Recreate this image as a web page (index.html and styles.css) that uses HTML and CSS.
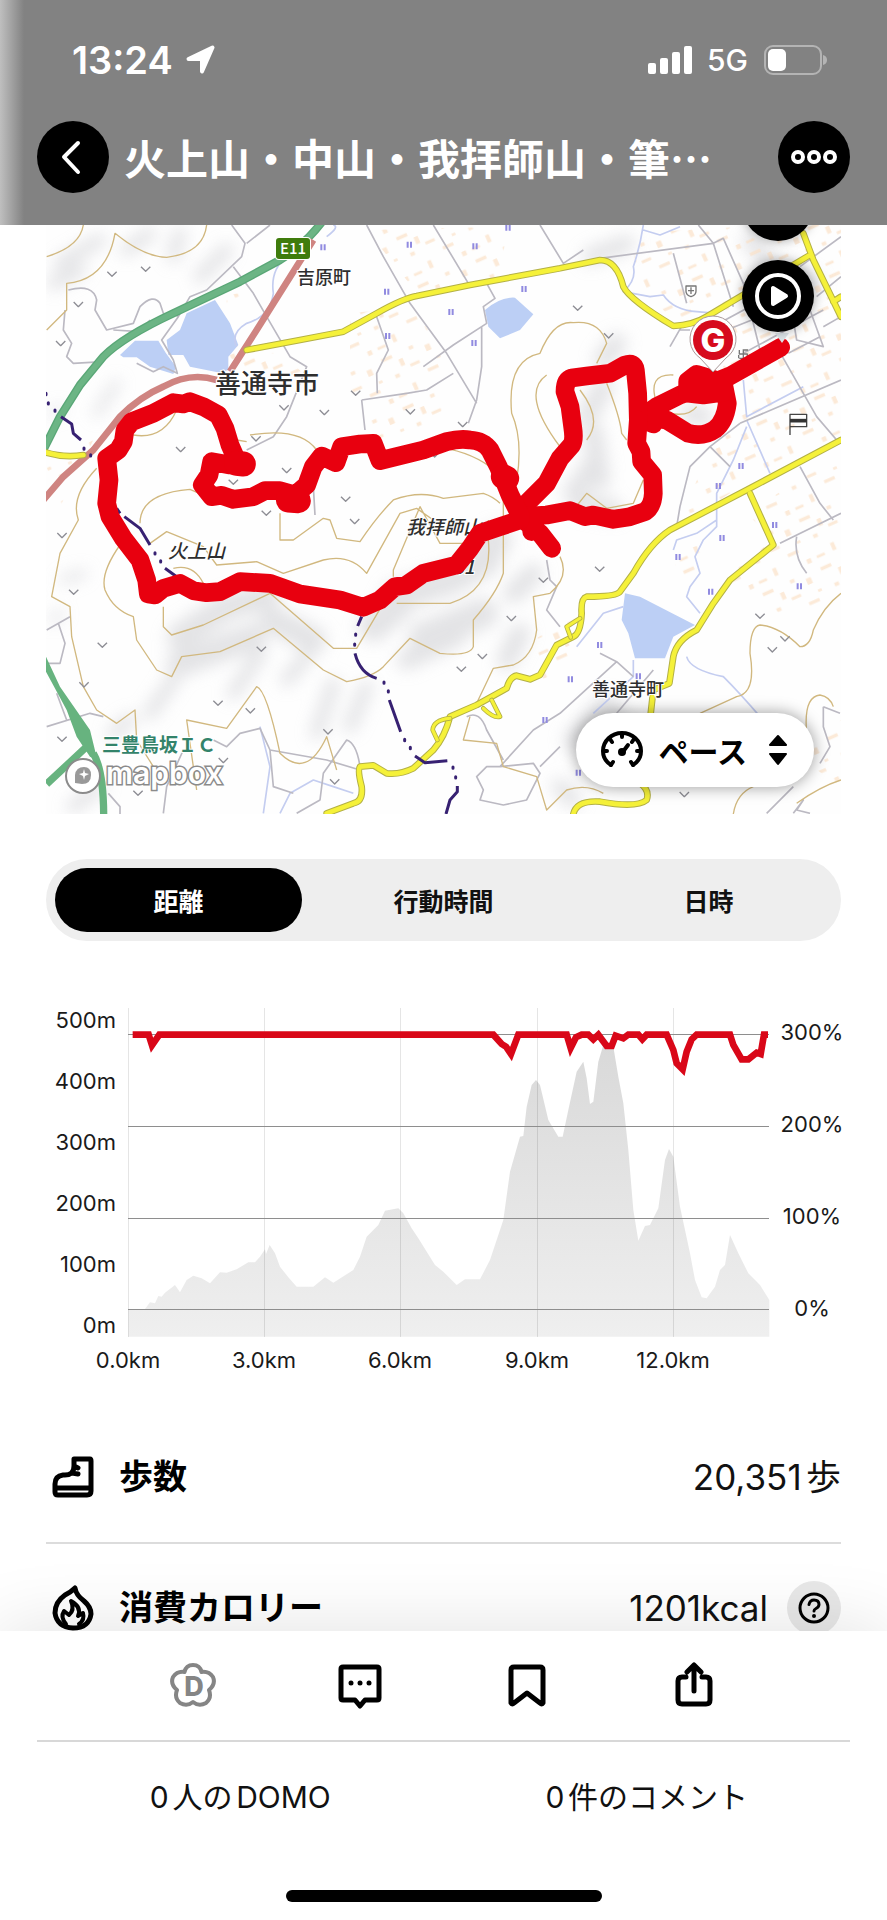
FILE: index.html
```html
<!DOCTYPE html>
<html lang="ja">
<head>
<meta charset="utf-8">
<meta name="viewport" content="width=device-width, initial-scale=1">
<title>活動記録</title>
<link rel="stylesheet" href="styles.css">
</head>
<body>
<header class="header">
  <div class="status">
    <span class="status-time">13:24</span>
    <svg class="status-arrow" viewBox="0 0 30 30" aria-hidden="true"><path d="M27.500 2.500L17 26.500V14H3.500Z" fill="#fff" stroke="#fff" stroke-width="4" stroke-linejoin="round"/></svg>
    <svg class="status-signal" viewBox="0 0 45 28" aria-hidden="true"><g fill="#fff"><rect y="17" width="8" height="11" rx="2"/><rect x="12" y="12" width="8" height="16" rx="2"/><rect x="24" y="6" width="8" height="22" rx="2"/><rect x="36" width="8" height="28" rx="2"/></g></svg>
    <span class="status-net">5G</span>
    <svg class="status-battery" viewBox="0 0 63 30" aria-hidden="true"><rect x="1" y="1" width="56" height="28" rx="8" fill="none" stroke="#b4b4b4" stroke-width="2"/><rect x="4" y="4" width="18" height="22" rx="5" fill="#fff"/><path d="M59 10q4 1 4 5t-4 5z" fill="#b4b4b4"/></svg>
  </div>
  <div class="nav">
    <button class="round" aria-label="戻る"><svg viewBox="0 0 72 72"><path d="M41 22L27 36L41 51" fill="none" stroke="#fff" stroke-width="4" stroke-linecap="round" stroke-linejoin="round"/></svg></button>
    <h1 class="title">火上山・中山・我拝師山・筆…</h1>
    <button class="round" aria-label="その他"><svg viewBox="0 0 72 72"><g fill="none" stroke="#fff" stroke-width="4"><circle cx="20" cy="36" r="5"/><circle cx="36" cy="36" r="5"/><circle cx="52" cy="36" r="5"/></g></svg></button>
  </div>
</header>

<main class="main">
  <section class="map" aria-label="地図">
    <svg class="map-art" viewBox="46 225 795 589">
      <defs>
        <path id="veg" d="M-14-8L0 6L14-8" fill="none" stroke="#8d8d94" stroke-width="4"/>
        <path id="rice" d="M-5-9V9M5-9V9" fill="none" stroke="#918be0" stroke-width="6"/>
        <filter id="soft" x="-30%" y="-30%" width="160%" height="160%"><feGaussianBlur stdDeviation="24"/></filter>
        <pattern id="town" width="190" height="158" patternUnits="userSpaceOnUse" patternTransform="rotate(-24)"><path d="M4 8h34v11H4zM52 30h13v22H52zM94 7h14v10H94zM23 68h14v11H23zM78 56h30v9H78zM140 22h16v20H140zM120 90h34v10H120zM60 112h12v24H60zM8 130h26v8H8zM165 128h14v14H165zM160 66h12v8H160z" fill="#fbe2c8" opacity=".7"/></pattern>
      </defs>
      <rect x="46" y="225" width="795" height="589" fill="#fefefe"/>
      <g transform="translate(40 220) scale(.33333)" stroke-linejoin="round">
        <g filter="url(#soft)" fill="none" stroke="#cdced2" stroke-linecap="round" opacity=".55">
          <path d="M60 130L180 60M260 90L330 40M400 110L420 40M480 170L560 90M40 190L120 150" stroke-width="40"/>
          <path d="M230 490L170 580M60 570L40 580M70 1080L130 1060M60 1180L40 1200" stroke-width="26"/>
          <path d="M420 1250L560 1160L680 1130M420 1330L640 1250M700 1200L820 1260" stroke-width="80"/>
          <path d="M330 1480L400 1380M580 1420L660 1300M740 1380L800 1310M830 1540L880 1390M930 1520L980 1400M220 1540L270 1500M100 1760L180 1700" stroke-width="40"/>
          <path d="M1070 1130L1230 1080L1340 1020M1000 1220L1080 1150M1150 1250L1330 1180M1320 1020L1370 960" stroke-width="90"/>
          <path d="M1100 1320L1250 1250M1480 1060L1420 1120M1400 1320L1440 1240M1600 1560L1700 1450" stroke-width="60"/>
          <path d="M1660 640L1680 780M1690 500L1640 590M1720 870L1620 850M1990 590L1950 580M1600 820L1670 720M1730 370L1690 420" stroke-width="60"/>
          <path d="M1650 110L1760 70M2130 60L2180 120M2250 150L2320 190" stroke-width="50"/>
          <path d="M1560 1700L1600 1740M1740 1480L1680 1500" stroke-width="50"/>
        </g>
        <g fill="url(#town)">
          <path d="M980 30L1400 20L1380 190L1140 230ZM930 280L1120 260L1220 420L1200 620L1020 660L930 520ZM540 390L720 400L790 460L700 500L620 450Z"/>
          <path d="M1770 40L2200 15H2403V660L2100 800L1900 930L1990 740L2100 540L2020 380L1900 300L1800 200Z"/>
          <path d="M2120 880L2403 700V1140L2220 1180L2040 1080L2200 960ZM1900 1000L2060 950L1920 1120ZM1480 1260L1620 1180L1600 1340L1500 1380ZM560 225l40-5v35h-40z"/>
          <path d="M20 740L160 660L60 860ZM2260 1600L2403 1500V1700Z"/>
        </g>
        <g fill="#bccff5">
          <path d="M525 240L440 280L420 330L380 360L385 405L430 405L450 440L540 458L565 450L565 410L595 375L570 310Z"/>
          <path d="M240 405L285 362L355 362L378 400L408 440L400 462L330 440L290 412L250 412Z"/>
          <path d="M1335 270Q1380 230 1425 233L1480 283L1440 330L1380 355L1345 320Z"/>
          <path d="M1755 1120L1800 1130L1965 1215L1900 1250L1875 1315H1785L1765 1240L1745 1200Z"/>
        </g>
        <g fill="none" stroke="#c4cdf0" stroke-width="5">
          <path d="M860 50Q900 20 880 15M590 380Q570 340 620 310Q690 290 700 220Q690 150 740 110"/>
          <path d="M1810 15Q1800 80 1780 140Q1790 180 1750 215L1830 230L1870 225Q1900 270 1970 275L2030 280M1810 30L1860 45L1920 20"/>
          <path d="M2110 480L2120 590L2290 500M2120 600L2190 760M2120 620L2080 720L2030 820V920L1990 960L1965 1010L1980 1060L1950 1100L1940 1130L1980 1180M2030 900L1970 940L1910 960L1900 990"/>
          <path d="M1940 1310Q1950 1350 2050 1370Q2100 1420 2160 1490M1750 1160L1690 1180L1610 1280M1780 1320V1370L1660 1480M660 1520L690 1640L670 1780M720 1780L750 1720L820 1680L880 1700L940 1720"/>
        </g>
        <g fill="none" stroke="#bbb9c2" stroke-width="5">
          <path d="M575 15L615 70L605 110L500 210L450 230L415 290L365 360L400 420L412 460L370 440L340 455L290 430M690 15L620 70M580 140L640 220L680 290L750 410L800 440L740 590L700 650L620 690"/>
          <path d="M85 210Q160 190 170 240L165 270L200 330L280 310L300 260Q340 220 360 250L370 280L400 290M75 270L70 330L95 370L80 410L100 430L190 425M220 330L300 335L330 300M410 290L440 260"/>
          <path d="M980 15L1030 110L1110 250L1220 400L1310 550M1180 15L1285 190M1500 15L1570 130L1630 90M1010 290L1045 390L1010 460L1012 520M965 540L1100 520L1160 510L1240 460M965 540L975 630M1340 190L1365 235L1330 260L1340 310L1240 375L1150 440M1325 320L1325 440L1310 540L1285 610M820 800L825 885"/>
          <path d="M1680 115L2020 70L2050 55L2110 190L2160 390M1900 100L1940 250M1975 15L2020 70L2080 260M2000 330L2240 200M1930 310L1890 380M2110 400L2350 270M2060 330L2160 290M1920 330L1950 330M2255 270L2270 360L2350 380L2310 270M2245 400L2340 350M2210 380L2330 590L2390 660M2100 610L2403 480M2280 140L2403 50M2330 230L2403 170M2350 320L2403 290"/>
          <path d="M2100 610L2010 680L1950 740L1920 860L1910 920M2010 680L2070 740M2280 740L2340 850L2380 900M2220 970L2403 880M2270 950Q2260 1010 2300 1060"/>
          <path d="M1680 1300L1730 1325L1780 1370M1730 1325L1560 1480L1480 1530L1380 1640L1340 1640L1310 1670L1330 1710L1320 1740L1390 1755L1460 1740L1500 1660L1480 1630L1380 1640M1560 1580L1500 1640M1280 1490Q1320 1470 1340 1530L1390 1620M1840 1350L1730 1480"/>
          <path d="M20 1230L90 1190M55 1210L75 1270L60 1330L20 1330M20 1520L150 1480L190 1490M50 1420L80 1500M520 1560L560 1580L600 1540L660 1525L690 1590L860 1620L960 1650M770 1780L840 1740L850 1660L920 1560Q950 1570 960 1640M370 1780L380 1700L430 1590M205 1720L240 1760V1782M690 1590L700 1700L760 1720"/>
          <path d="M1520 1020L1530 1080L1550 1100L1520 1170L1560 1220M2350 1460L2400 1480M2350 1460L2350 1520L2370 1580L2340 1630M2180 1780L2260 1700M2260 1780L2290 1740L2270 1770L2310 1780"/>
        </g>
        <g fill="none" stroke="#d1b87f" stroke-width="4">
          <path d="M20 110Q120 80 130 15M20 330L80 270V190Q200 180 225 40Q310 110 380 112Q490 100 500 15M280 645Q370 660 410 570M590 660L620 665M630 645Q780 620 830 690"/>
          <path d="M170 745Q90 830 115 900L60 1000L35 1130L90 1160L95 1250L130 1400L170 1470L230 1510L285 1470L290 1560L340 1640M240 975Q180 1060 195 1110Q220 1170 280 1190L290 1260L350 1350L395 1370L425 1310L540 1295L700 1225L850 1350L920 1385Q1000 1370 1030 1340L1110 1255L1200 1300Q1290 1310 1300 1280V1200Q1370 1120 1390 1060V840"/>
          <path d="M300 910Q300 820 450 808L500 830M330 970L380 935L490 980L530 1035L650 1025L730 1060L850 1020Q930 1000 980 1060L1080 880L1130 865L1180 900M370 1160V1220L395 1245L490 1215L690 1120L880 1285H950L1030 1150M720 880V960L760 960L850 895L870 900L890 955L960 965Q1010 890 1060 840Q1140 810 1210 835L1330 820Q1360 830 1380 850M1060 1070V1050L1140 860L1200 970H1290M1070 1150H1230Q1360 1110 1345 960V900M400 1045Q460 1030 490 1090M1180 680Q1280 690 1350 740"/>
          <path d="M470 1710L440 1500L560 1525L650 1400Q680 1410 720 1600Q800 1680 860 1550L890 1650M1430 780Q1450 660 1415 580Q1400 420 1500 400Q1540 300 1600 308Q1680 300 1700 370L1670 430M1560 680Q1440 520 1520 465M1620 510Q1690 600 1640 660M1700 490Q1740 590 1745 640L1760 660M1850 550Q1820 460 1900 465M1850 570Q1940 600 1970 560M1600 870L1640 820L1700 865L1780 850L1810 780"/>
          <path d="M1560 1010Q1590 1070 1530 1120L1480 1130L1490 1230Q1480 1310 1420 1335L1360 1345L1310 1450M1290 1490L1270 1560L1370 1570L1390 1640L1490 1670L1520 1770L1580 1710Q1640 1690 1690 1720M1980 1480L2090 1430Q2150 1420 2130 1300Q2130 1220 2160 1215Q2220 1220 2280 1280Q2310 1280 2320 1230Q2350 1160 2403 1120M2080 1782Q2090 1720 2140 1700M2300 1540Q2290 1430 2340 1425Q2370 1430 2380 1460M2270 1750Q2340 1700 2403 1680"/>
        </g>
        <g fill="none" stroke-linecap="butt">
          <path d="M10 690L60 590L120 495L190 410Q250 350 400 280L600 185L720 120Q800 70 850 0" stroke="#5aa777" stroke-width="25"/>
          <path d="M10 690L60 590L120 495L190 410Q250 350 400 280L600 185L720 120Q800 70 850 0" stroke="#6cb585" stroke-width="17"/>
          <path d="M10 840L70 770L160 690L240 590Q300 530 370 500Q450 455 530 480M570 455L650 330L820 60" stroke="#cf8481" stroke-width="20"/>
          <path d="M160 1600Q190 1650 191 1782M140 1580L20 1692" stroke="#67b37f" stroke-width="22"/>
          <path d="M18 1310L60 1400L150 1530L172 1620L150 1610L110 1550L80 1470L18 1355Z" fill="#67b37f"/>
        </g>
        <g fill="none" stroke-linecap="round">
          <g stroke="#b3b045" stroke-width="20">
            <path id="y1" d="M10 695Q70 715 130 705M620 390L780 360L910 335L1010 280Q1090 235 1130 228L1290 195L1560 145L1680 120Q1730 120 1750 200Q1770 240 1900 318Q1960 315 2000 290L2310 105M2290 40L2320 120L2403 290M2380 245L2403 230"/>
            <path id="y2" d="M2403 660L2120 810L1890 930Q1830 970 1780 1060L1740 1115Q1730 1130 1640 1130Q1622 1135 1625 1180Q1622 1240 1600 1250L1550 1275L1500 1365L1470 1378L1430 1367Q1410 1370 1400 1405L1310 1455L1230 1490Q1215 1550 1180 1590L1120 1645Q1080 1665 1040 1660L1000 1636L960 1640Q952 1650 965 1700Q970 1745 940 1750L860 1780"/>
            <path id="y3" d="M2130 820L2200 975L2070 1080L2020 1150L1970 1230Q1910 1260 1900 1310L1888 1390L1840 1410L1830 1500M1600 1782Q1610 1740 1680 1745Q1790 1765 1820 1740Q1830 1710 1800 1690"/>
          </g>
          <g stroke="#f5f139" stroke-width="14"><use href="#y1"/><use href="#y2"/><use href="#y3"/></g>
          <path d="M1620 1195L1580 1220L1592 1252M1355 1440L1380 1490Q1360 1495 1330 1465M1230 1495Q1180 1500 1178 1530L1192 1560" stroke="#b3b045" stroke-width="14"/>
          <path d="M1620 1195L1580 1220L1592 1252M1355 1440L1380 1490Q1360 1495 1330 1465M1230 1495Q1180 1500 1178 1530L1192 1560" stroke="#f5f139" stroke-width="9"/>
        </g>
        <g stroke="#372172" stroke-width="9" fill="none">
          <path d="M63 590L95 612L100 640L123 660M230 865L240 880M253 890L300 925L330 975M375 1045L410 1070M965 1190L953 1218M945 1300Q960 1360 1010 1375M1048 1440L1082 1535M1125 1608L1155 1628L1222 1622M1252 1698V1715L1230 1740L1218 1782"/>
          <path d="M18 520V524M25 548V552M45 570V574M132 684V688M152 704V708M345 998V1002M362 1022V1026M947 1242V1246M944 1272V1276M1032 1386V1390M1045 1412V1416M1094 1558V1562M1111 1582V1586M1239 1641V1645M1247 1670V1674" stroke-linecap="round"/>
        </g>
        <g>
          <use href="#veg" x="216" y="163"/><use href="#veg" x="317" y="148"/><use href="#veg" x="115" y="254"/><use href="#veg" x="62" y="371"/><use href="#veg" x="732" y="564"/><use href="#veg" x="853" y="578"/><use href="#veg" x="648" y="657"/><use href="#veg" x="422" y="689"/><use href="#veg" x="740" y="752"/><use href="#veg" x="580" y="787"/><use href="#veg" x="679" y="880"/><use href="#veg" x="66" y="947"/><use href="#veg" x="101" y="1117"/><use href="#veg" x="187" y="1276"/><use href="#veg" x="132" y="1395"/><use href="#veg" x="66" y="1558"/><use href="#veg" x="664" y="1288"/><use href="#veg" x="534" y="1450"/><use href="#veg" x="631" y="1473"/><use href="#veg" x="864" y="1536"/><use href="#veg" x="550" y="1622"/><use href="#veg" x="294" y="1720"/><use href="#veg" x="884" y="1686"/>
          <use href="#veg" x="947" y="520"/><use href="#veg" x="1111" y="576"/><use href="#veg" x="1268" y="614"/><use href="#veg" x="1613" y="265"/><use href="#veg" x="1706" y="348"/><use href="#veg" x="917" y="838"/><use href="#veg" x="944" y="905"/><use href="#veg" x="1510" y="1081"/><use href="#veg" x="1414" y="1196"/><use href="#veg" x="1327" y="1310"/><use href="#veg" x="1264" y="1348"/><use href="#veg" x="1679" y="1048"/><use href="#veg" x="2160" y="1189"/><use href="#veg" x="2235" y="1257"/><use href="#veg" x="2197" y="1290"/><use href="#veg" x="1933" y="1724"/><use href="#veg" x="1184" y="705"/>
          <use href="#rice" x="849" y="82"/><use href="#rice" x="1108" y="74"/><use href="#rice" x="1305" y="79"/><use href="#rice" x="1404" y="23"/><use href="#rice" x="1040" y="215"/><use href="#rice" x="1452" y="207"/><use href="#rice" x="1233" y="276"/><use href="#rice" x="1043" y="348"/><use href="#rice" x="1302" y="369"/><use href="#rice" x="2103" y="738"/><use href="#rice" x="2035" y="798"/><use href="#rice" x="2204" y="915"/><use href="#rice" x="2046" y="954"/><use href="#rice" x="1914" y="1011"/><use href="#rice" x="2012" y="1115"/><use href="#rice" x="2278" y="1099"/><use href="#rice" x="1679" y="1275"/><use href="#rice" x="1591" y="1378"/><use href="#rice" x="1795" y="1369"/><use href="#rice" x="1515" y="1500"/><use href="#rice" x="1615" y="1658"/>
        </g>
        <g fill="none" stroke="#777" stroke-width="4">
          <path d="M1938 198H1968V214Q1968 226 1953 230Q1938 226 1938 214ZM1953 202V222M1944 212H1962M2098 390V402H2122V415M2110 388V415M2096 415V405M2098 415H2110M2110 390H2124"/>
          <path d="M2250 645V583H2300V620H2250" stroke="#444"/><path d="M2250 602H2300" stroke="#333" stroke-width="11"/>
        </g>
      </g>
      <g class="place">
        <rect x="276" y="238" width="34" height="21" rx="3" fill="#3f7c0c"/>
        <text x="293" y="254" class="place-road">E11</text>
        <text x="297" y="284" class="place-small">吉原町</text>
        <text x="215" y="393" class="place-large">善通寺市</text>
        <text x="168" y="558" class="place-peak">火上山</text>
        <text x="406" y="534" class="place-peak">我拝師山</text>
        <text x="592" y="696" class="place-small">善通寺町</text>
        <text x="453" y="574" class="place-peak">81</text>
        <text x="102" y="752" class="place-ic">三豊鳥坂ＩＣ</text>
      </g>
      <g transform="translate(40 220) scale(.33333)" fill="none" stroke="#e8000f" stroke-width="56" stroke-linecap="round" stroke-linejoin="round">
        <path d="M2222 382L2070 468L1990 500L1920 525L1850 560L1800 595M2050 490L2062 550Q2055 605 2025 628Q1990 652 1945 640L1880 600L1800 590M1800 595L1840 612"/>
        <path d="M1945 485L1970 465L2020 480L2050 515L1990 523L1945 518Z" fill="#e8000f" stroke-width="60"/>
        <path d="M1795 600L1793 520L1786 450Q1783 425 1755 435L1710 460L1640 468L1595 474Q1575 480 1575 515L1590 560L1598 620Q1604 660 1595 675L1560 715L1520 790L1460 850L1440 885"/>
        <path d="M1795 600L1790 670L1803 695L1805 725L1838 765L1840 820Q1838 860 1815 875L1770 890L1720 898L1660 885L1635 890L1590 872L1520 885L1440 890L1475 920L1500 940L1535 985M1475 915V935"/>
        <path d="M1440 885L1410 825L1392 780L1375 740L1350 690Q1330 662 1290 660Q1260 655 1220 665L1150 690L1020 722L1000 670L960 672L905 680L888 728L845 708L820 740L800 795L765 825L720 812L675 812L640 830L580 838L545 826L515 830L487 795L507 765L515 725L570 735L595 732L570 675L555 625L535 585L490 560L450 545L430 552L400 548L340 580L275 605L255 630L250 665L235 690L200 715L207 780L200 850L210 890L250 955L300 1020L320 1080L325 1122L345 1125L370 1105L420 1090L460 1112L500 1118L540 1115L600 1085L690 1090L780 1122L900 1140L970 1162L1020 1140L1065 1100L1100 1095L1150 1060L1250 1035L1290 985L1320 940L1380 920L1440 900Z"/>
        <path d="M590 730L610 732M745 840L775 842M1390 770L1400 775" stroke-width="75"/>
      </g>
      <g>
        <path d="M775 333H789L782 343Z" fill="#dfe6ea"/>
        <path d="M713 372L700 358A23 23 0 1 1 726 358Z" fill="#fff" stroke="#a99" stroke-width="1"/>
        <circle cx="713" cy="340" r="20" fill="#d60b1d"/>
        <text x="713" y="352" class="pin-text">G</text>
      </g>
      <g>
        <circle cx="83" cy="776" r="17" fill="#fff" stroke="#8b8b8b" stroke-width="2"/>
        <path d="M75 783V775Q76 767 84 767Q91 767 91 775Q91 784 82 784Z" fill="#999"/><path d="M84 769L85 773L89 774L85 776L84 780L83 776L79 774L83 773Z" fill="#fff"/>
        <text x="106" y="784" class="mapbox-text">mapbox</text>
      </g>
    </svg>
    <div class="map-tools">
      <button class="round" aria-label="レイヤー"></button>
      <button class="round" aria-label="再生"><svg viewBox="0 0 72 72"><circle cx="36" cy="36" r="21" fill="none" stroke="#fff" stroke-width="4"/><path d="M31 28V44L44 36Z" fill="#fff" stroke="#fff" stroke-width="4" stroke-linejoin="round"/></svg></button>
    </div>
    <button class="pace" aria-haspopup="listbox">
      <svg class="pace-gauge" viewBox="0 0 42 38" aria-hidden="true"><g fill="none" stroke="#000" stroke-linecap="round"><path d="M10 34Q2 29 2 20A19 18 0 0 1 40 20Q40 29 32 34" stroke-width="4"/><path d="M10 34L12 31M32 34L30 31M21 3V6M9 8L11 11M33 8L31 11M3 20H6M39 20H36" stroke-width="4"/><path d="M21 22L27 14" stroke-width="4"/></g><circle cx="21" cy="21" r="4"/></svg>
      <span>ペース</span>
      <svg class="pace-sort" viewBox="0 0 20 32" aria-hidden="true"><path d="M10 2L18 11H2ZM10 30L18 20H2Z" stroke="#000" stroke-width="2" stroke-linejoin="round"/></svg>
    </button>
  </section>

  <div class="segment" role="tablist">
    <button class="seg seg-on" role="tab" aria-selected="true">距離</button>
    <button class="seg" role="tab" aria-selected="false">行動時間</button>
    <button class="seg" role="tab" aria-selected="false">日時</button>
  </div>

  <svg class="chart" viewBox="46 1001 795 380" role="img" aria-label="標高とペースのグラフ">
    <defs><linearGradient id="elev" x1="0" y1="0" x2="0" y2="1"><stop offset="0" stop-color="#d9d9d9"/><stop offset="1" stop-color="#efefef"/></linearGradient></defs>
    <path transform="translate(30 990) scale(.33333)" fill="url(#elev)" d="M295 1040V957H345L360 937 375 940 385 918 395 920 405 908 435 885 450 907 470 870 490 857 515 865 540 880 570 847 590 848 620 838 655 817 675 817 690 800 705 778 708 792 719 765 735 790 750 830 775 862 800 890 850 890 885 862 910 878 970 840 990 800 1010 740 1045 705 1065 662 1105 655 1120 670 1145 715 1165 745 1215 825 1240 845 1280 885 1305 868 1350 868 1380 810 1420 690 1440 545 1470 440 1480 438 1490 350 1505 285 1518 270 1530 285 1555 390 1585 440 1598 440 1615 360 1640 245 1660 215 1670 265 1680 342 1690 335 1705 215 1720 165 1750 170 1765 260 1780 340 1795 480 1810 660 1825 752 1845 708 1860 705 1885 655 1905 510 1917 477 1930 500 1950 650 1980 790 1995 870 2015 922 2030 925 2055 890 2070 840 2085 825 2100 735 2125 790 2155 850 2190 885 2218 930V1040Z"/>
    <g class="grid-v"><path d="M128.500 1008V1337M264.500 1008V1337M400.500 1008V1337M537.500 1008V1337M673.500 1008V1337"/></g>
    <g class="grid-h"><path d="M128 1034.500H769M128 1126.500H769M128 1218.500H769M128 1309.500H769"/></g>
    <path transform="translate(30 990) scale(.33333)" fill="none" stroke="#d90718" stroke-width="20" stroke-miterlimit="3" d="M308 134H356L366 166 388 134H1390L1415 162 1428 170 1443 192 1465 134H1610L1622 174 1638 142 1655 134H1675L1690 148 1705 134 1730 168H1745L1757 137 1780 145 1795 134H1825L1837 148 1850 134H1910L1930 180 1940 220 1958 238 1970 185 1985 148 2000 134H2100L2110 165 2135 208H2155L2180 188 2192 192 2202 134H2214"/>
    <g class="axis axis-end"><text x="116" y="1028">500m</text><text x="116" y="1089">400m</text><text x="116" y="1150">300m</text><text x="116" y="1211">200m</text><text x="116" y="1272">100m</text><text x="116" y="1333">0m</text></g>
    <g class="axis axis-mid"><text x="812" y="1040">300%</text><text x="812" y="1132">200%</text><text x="812" y="1224">100%</text><text x="812" y="1316">0%</text><text x="128" y="1368">0.0km</text><text x="264" y="1368">3.0km</text><text x="400" y="1368">6.0km</text><text x="537" y="1368">9.0km</text><text x="673" y="1368">12.0km</text></g>
  </svg>

  <dl class="stats">
    <div class="stat">
      <svg class="stat-icon" viewBox="0 0 42 42" aria-hidden="true"><g fill="none" stroke="#000" stroke-width="5" stroke-linejoin="round" stroke-linecap="round"><path d="M22 3H38Q39 3 39 5V35Q39 39 35 39H6Q3 39 3 36V28Q3 20 11 19Q22 20 22 10ZM3 32H39M22 10L26 12M20 17L26 18"/></g></svg>
      <dt>歩数</dt><dd>20,351歩</dd>
    </div>
    <div class="stat">
      <svg class="stat-icon stat-flame" viewBox="0 0 42 46" aria-hidden="true"><g fill="none" stroke="#000" stroke-width="5" stroke-linejoin="round" stroke-linecap="round"><path d="M23 3Q24 10 32 16Q39 22 39 29Q37 43 21 43Q5 42 3 28Q3 17 13 10Q19 7 23 3Z"/><path d="M14 39Q8 32 12 26L17 30Q23 25 19 16Q30 22 26 31L31 28Q33 35 27 39" stroke-width="4"/></g></svg>
      <dt>消費カロリー</dt><dd>1201kcal</dd>
      <button class="help" aria-label="ヘルプ"><svg viewBox="0 0 32 32"><circle cx="16" cy="16" r="14" fill="none" stroke="#000" stroke-width="3"/><path d="M11 12.500Q12 8 16 8Q21 8 21 12.500Q21 15 18 16.500Q16 17.500 16 19" fill="none" stroke="#000" stroke-width="3" stroke-linecap="round"/><circle cx="16" cy="24" r="2"/></svg></button>
    </div>
  </dl>
</main>

<footer class="footer">
  <div class="actions">
    <button class="act" aria-label="DOMO"><svg viewBox="0 0 48 48"><path d="M24 3Q31 3 32.500 10Q40 9 44 15Q47 22 40 28Q43 36 37 41Q30 45 24 40Q18 45 11 41Q5 36 8 28Q1 22 4 15Q8 9 15.500 10Q17 3 24 3Z" fill="none" stroke="#858585" stroke-width="4" stroke-linejoin="round"/><text x="25" y="34" class="domo-text">D</text></svg></button>
    <button class="act" aria-label="コメント"><svg viewBox="0 0 48 48"><path d="M7 5H41Q43 5 43 7V36Q43 38 41 38H29L24 44L19 38H7Q5 38 5 36V7Q5 5 7 5Z" fill="none" stroke="#000" stroke-width="5" stroke-linejoin="round"/><g><circle cx="15" cy="21" r="2.500"/><circle cx="24" cy="21" r="2.500"/><circle cx="33" cy="21" r="2.500"/></g></svg></button>
    <button class="act" aria-label="保存"><svg viewBox="0 0 48 48"><path d="M11 5H37Q40 5 40 8V41Q39 43 37 41L24 31L11 41Q9 43 8 41V8Q8 5 11 5Z" fill="none" stroke="#000" stroke-width="5" stroke-linejoin="round"/></svg></button>
    <button class="act" aria-label="共有"><svg viewBox="0 0 48 48"><path d="M16 15H12Q8 15 8 19V38Q8 42 12 42H36Q40 42 40 38V19Q40 15 36 15H32M24 29V4M17 10L24 3L31 10" fill="none" stroke="#000" stroke-width="5" stroke-linejoin="round" stroke-linecap="round"/></svg></button>
  </div>
  <div class="counts"><a href="#domo">0人のDOMO</a><a href="#comments">0件のコメント</a></div>
  <div class="home"></div>
</footer>
</body>
</html>
```
FILE: styles.css
```css
* { box-sizing: border-box; }
body {
  margin: 0;
  height: 100vh;
  display: flex;
  flex-direction: column;
  background: #fff;
  color: #111;
  font-family: Inter, "Noto Sans CJK JP", sans-serif;
  text-autospace: normal;
}
button { border: 0; padding: 0; background: none; color: inherit; font: inherit; }
svg { display: block; }

.header {
  flex: none;
  color: #fff;
  background: linear-gradient(to right, #bfbfbf, #828282 24px);
  padding: 32px 37px;
}
.status { display: flex; align-items: center; height: 56px; padding: 0 23px 0 35px; }
.status-time { font-size: 38px; font-weight: 600; }
.status-arrow { width: 30px; height: 30px; margin: 0 auto 0 12px; }
.status-signal { width: 45px; height: 28px; }
.status-net { font-size: 30px; font-weight: 500; margin: 0 16px 0 14px; }
.status-battery { width: 63px; height: 30px; }
.nav { display: flex; align-items: center; padding-top: 33px; }
.round { flex: none; width: 72px; height: 72px; border-radius: 50%; background: #000; }
.title {
  flex: 1;
  margin: 0 0 0 15px;
  font-size: 42px;
  line-height: 60px;
  font-weight: 700;
  font-family: "Noto Sans CJK JP", sans-serif;
  white-space: nowrap;
}

.main { flex: 1; min-height: 0; overflow: hidden; padding: 0 46px; }
.map { position: relative; overflow: hidden; }
.map-art { width: 100%; }
.map-tools { position: absolute; top: -56px; right: 27px; display: grid; gap: 19px; }
.map-tools .round { box-shadow: 0 0 12px rgba(0, 0, 0, .35); }
.pace {
  position: absolute;
  right: 27px;
  bottom: 27px;
  height: 74px;
  padding: 0 26px 0 25px;
  display: flex;
  align-items: center;
  border-radius: 37px;
  background: #fff;
  box-shadow: 0 0 16px rgba(0, 0, 0, .4);
  font-size: 30px;
  font-weight: 700;
  color: #000;
}
.pace-gauge { width: 42px; height: 38px; margin-right: 16px; }
.pace-sort { width: 20px; height: 32px; margin-left: 21px; }

.place { font-family: "Noto Sans CJK JP", sans-serif; fill: #2e2e2e; stroke: #fff; stroke-width: 2px; paint-order: stroke; font-weight: 500; }
.place-small { font-size: 18px; }
.place-large { font-size: 26px; }
.place-peak { font-size: 19px; font-style: italic; }
.place-ic { font-size: 19px; font-weight: 700; fill: #33836a; }
.place-road { font-size: 15px; fill: #fff; stroke: none; text-anchor: middle; }
.pin-text { font-size: 33px; font-weight: 800; fill: #fff; text-anchor: middle; }
.mapbox-text { font-size: 30px; font-weight: 600; fill: #fff; stroke: #8b8b8b; stroke-width: 3px; paint-order: stroke; }

.segment {
  display: grid;
  grid-template-columns: repeat(3, 1fr);
  gap: 18px;
  margin-top: 45px;
  padding: 9px;
  border-radius: 41px;
  background: #eee;
}
.seg { height: 64px; border-radius: 32px; font-size: 25px; font-weight: 700; }
.seg-on { background: #000; color: #fff; }

.chart { width: 100%; margin-top: 60px; overflow: visible; }
.axis { font-size: 22px; fill: #1a1a1a; }
.axis-end { text-anchor: end; }
.axis-mid { text-anchor: middle; }
.grid-v { stroke: #000; stroke-opacity: .1; }
.grid-h { stroke: #8e8e8e; }

.stats { margin: 31px 0 0; }
.stat { display: flex; align-items: center; height: 130px; }
.stat + .stat { border-top: 2px solid #dcdcdc; }
.stat-icon { width: 42px; height: 42px; margin: 0 25px 0 6px; }
.stat-flame { height: 46px; }
.stat dt { flex: 1; font-size: 34px; line-height: 46px; font-weight: 700; color: #000; }
.stat dd { margin: 0; font-size: 35px; line-height: 46px; }
.help { width: 54px; height: 54px; margin-left: 19px; border-radius: 50%; background: #e8e8e8; }
.help svg { width: 32px; height: 32px; margin: 0 auto; }

.footer {
  flex: none;
  position: relative;
  background: #fff;
  box-shadow: 0 0 70px rgba(0, 0, 0, .12);
  padding: 0 37px 18px;
}
.actions {
  display: grid;
  grid-template-columns: repeat(4, 1fr);
  justify-items: center;
  padding: 31px 72px 30px;
  border-bottom: 2px solid #d8d8d8;
}
.act svg { width: 48px; height: 48px; }
.domo-text { font-size: 27px; font-weight: 800; fill: #858585; text-anchor: middle; }
.counts { display: grid; grid-template-columns: 1fr 1fr; text-align: center; font-size: 30px; line-height: 44px; padding: 33px 0 71px; }
.counts a { color: inherit; text-decoration: none; }
.home { width: 316px; height: 12px; margin: 0 auto; border-radius: 6px; background: #000; }
```
